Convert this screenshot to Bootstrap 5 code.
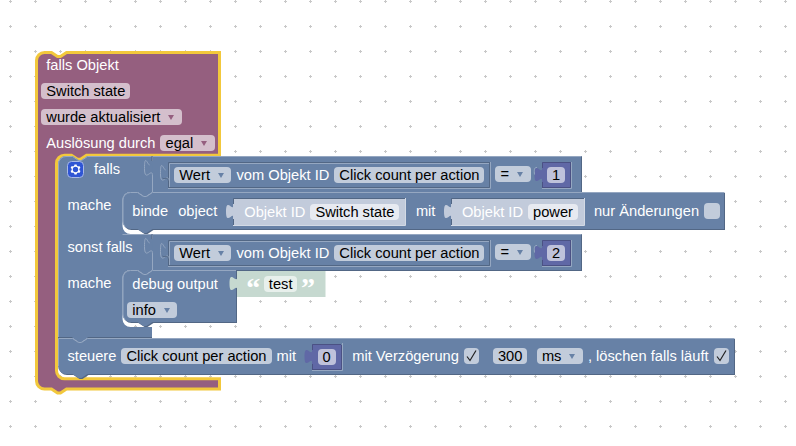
<!DOCTYPE html>
<html lang="de">
<head>
  <meta charset="UTF-8">
  <meta name="viewport" content="width=device-width, initial-scale=1">
  <title>Blockly - Switch state</title>
  <link href="https://cdn.jsdelivr.net/npm/bootstrap@5.3.3/dist/css/bootstrap.min.css" rel="stylesheet">
  <style>
    :root {
      --logic: #6781a6;
      --logic-dark: #526785;
      --logic-light: #95a7c1;
      --event: #955f7f;
      --math: #6068a6;
      --math-dark: #4b5184;
      --select: #f2c83c;
    }

    body {
      font: 14.667px/16px "Liberation Sans", Arial, sans-serif;
      color: #fff;
    }

    .workspace {
      width: 796px;
      height: 446px;
      background: #fff;
    }

    .shapes {
      top: 0;
      left: 0;
    }

    .shapes .main { fill: var(--logic); }
    .shapes .shade { fill: var(--logic-dark); }
    .shapes .light { fill: none; stroke: var(--logic-light); }
    .shapes .dark { fill: none; stroke: var(--logic-dark); }
    .shapes .number { fill: var(--math); }
    .shapes .number-dark { fill: none; stroke: var(--math-dark); }
    .shapes .selected { fill: var(--event); stroke: var(--select); stroke-width: 3; }

    .program {
      padding: 57px 0 0 41.3px;
      white-space: nowrap;
    }

    .head-rows { gap: 10px; }

    .txt { margin: 0 5px; }

    .field {
      height: 16px;
      padding: 0 5px;
      border-radius: 4px;
      background: rgba(255, 255, 255, .6);
      color: #000;
      flex: none;
    }

    .pick::after {
      content: "";
      display: inline-block;
      margin: 0 2.5px 2px 8px;
      border: 3px solid transparent;
      border-top: 5px solid var(--logic);
      border-bottom: 0;
    }

    .head-rows .pick::after { border-top-color: var(--event); }

    .tick {
      width: 15.5px;
      padding: 0;
    }

    .tick svg { display: block; }

    .body-rows { margin: 10px 0 0 21.2px; }

    .cond-row { height: 22px; }
    .cond-row > .side { width: 111.8px; }
    .cond-row > .cond { margin-top: 6px; }

    .do-row { margin-top: 14px; }
    .do-row > .side { width: 64.8px; }
    .do-row.first { height: 23px; margin-bottom: 19px; }
    .do-row.first > .inner { margin-top: 6px; }
    .do-row.second > .inner { margin-top: 1px; gap: 10px; }

    .op { margin: -1px 16.5px 0 11px; }
    .low { margin-top: 1px; }
    .gear { margin: 0 5px 0 4.5px; }
    .shadow-one { margin-left: 17px; }
    .shadow-two { margin-left: 16.5px; }
    .after-one { margin-left: 16.5px; }
    .after-two { margin-left: 16px; }
    .quote {
      width: 12px;
      height: 16px;
      font: bold 28px/16px "Liberation Serif", serif;
      text-indent: -1px;
      padding-top: 4px;
    }
    .string { margin-left: 24.5px; }
    .string .field { margin: 0 4.5px; }

    .control-row { margin-top: 30px; }
    .control-row .num { margin: 1px 11.5px 0 16.5px; }
    .control-row .delay { margin: 0 9.5px 0 13.5px; }
  </style>
</head>
<body>

<main class="workspace position-relative overflow-hidden">

  <!-- Grid and block bodies -->
  <svg class="shapes position-absolute" width="796" height="446" aria-hidden="true">
    <defs>
      <pattern id="grid" width="25" height="25" patternUnits="userSpaceOnUse">
        <path d="M9,1.5h3M10.5,0v3" stroke="#c8c8c8" fill="none"/>
      </pattern>
      <path id="ifBlock" d="M58,164 a8,8 0 0,1 8,-8 h6.500 l6,4 3,0 6,-4 H152.500 V192 l-6,4 -3,0 -6,-4 h-7 a8,8 0 0,0 -8,8 V226 a8,8 0 0,0 8,8 H152.500 V270 l-6,4 -3,0 -6,-4 h-7 a8,8 0 0,0 -8,8 V319 a8,8 0 0,0 8,8 H152 V338 H87.500 l-6,4 -3,0 -6,-4 H58 z"/>
      <path id="bindBlock" d="M122.500,200 a8,8 0 0,1 8,-8 h7 l6,4 3,0 6,-4 H724 V229 H152.500 l-6,4 -3,0 -6,-4 h-7 a8,8 0 0,1 -8,-8 z"/>
      <path id="debugBlock" d="M122.500,278 a8,8 0 0,1 8,-8 h7 l6,4 3,0 6,-4 H236 V322 H152.500 l-6,4 -3,0 -6,-4 h-7 a8,8 0 0,1 -8,-8 z"/>
      <path id="controlBlock" d="M58,338 H72.500 l6,4 3,0 6,-4 H734 V374 H87.500 l-6,4 -3,0 -6,-4 h-6.500 a8,8 0 0,1 -8,-8 z"/>
      <path id="plug" d="M0,20 c0,-10 -8,8 -8,-7.500 s8,2.500 8,-7.500"/>
      <g id="condBlock">
        <path class="shade" d="M152,156H582V193H152z"/>
        <path class="main" d="M152,156H581V192H152z"/>
        <use href="#plug" x="152.500" y="156" class="main"/>
        <path class="light" d="M152,156.500H581.500"/>
        <path class="light" d="M152.500,156V161 M152.500,176c0,-10 -8,8 -8,-7.500 s3,-4 5,-3.500 M152.500,176V192"/>
        <path class="dark" d="M152,156v5"/>
        <!-- value block -->
        <path class="dark" d="M168.500,188V162.500H490"/>
        <path class="light" d="M169.500,187V163.500H489"/>
        <path class="dark" d="M169,187.500H489.500V163"/>
        <path class="light" d="M168,188.500H490.500V162"/>
        <path class="light" d="M168.500,181c0,-10 -8,8 -8,-7.500 s3,-4 5,-3.500"/>
        <path class="dark" d="M168.500,181c-1,-5 -4,-1 -6,-3"/>
        <!-- number block -->
        <path class="number" d="M542,162H571V187H542z"/>
        <use href="#plug" x="542.500" y="162" class="number"/>
        <path class="number-dark" d="M542.500,168V162.500H571 M542.500,182V187.500 M542,187.500H570.500V163"/>
        <path class="light" d="M542,188.500H571.500V162"/>
        <path class="light" d="M537,167.500c-3,-.5 -3,3 -2.500,7"/>
      </g>
    </defs>
    <rect width="796" height="446" fill="url(#grid)"/>

    <!-- selected event block -->
    <path class="selected" d="M36.500,60.500 a8,8 0 0,1 8,-8 h7 l6,4 3,0 6,-4 H219.500 V155.300 H86.500 l-6,4 -3,0 -6,-4 h-7 a8,8 0 0,0 -8,8 V370.700 a8,8 0 0,0 8,8 H219.500 V389 H66.500 l-6,4 -3,0 -6,-4 h-7 a8,8 0 0,1 -8,-8 z"/>

    <use href="#ifBlock" class="main"/>
    <path class="light" d="M58.500,338V164 a7.500,7.500 0 0,1 7.500,-7.500 h6.500 l6,4 3,0 6,-4 H152"/>
    <path class="light" d="M122.500,234.500H152"/>

    <use href="#condBlock"/>
    <use href="#condBlock" y="78"/>

    <use href="#bindBlock" class="shade" x="1" y="1"/>
    <use href="#bindBlock" class="main"/>
    <path class="light" d="M125,226.500 a7.500,7.500 0 0,1 -2,-5.500 V200 a7.500,7.500 0 0,1 7.500,-7.500 h7 l6,4 3,0 6,-4 H724.500"/>
    <g fill="#c2cbdb">
      <path d="M233,199H405V225H233z"/>
      <use href="#plug" x="234" y="199"/>
      <path d="M451,199H584V225H451z"/>
      <use href="#plug" x="452" y="199"/>
    </g>
    <path class="dark" d="M233.500,204V198.500H405 M233.500,219v6 M451.500,204V198.500H584 M451.500,219v6"/>
    <path d="M233,225.500H405.500V198 M451,225.500H584.500V198" fill="none" stroke="#d3dae5"/>

    <use href="#debugBlock" class="shade" x="1" y="1"/>
    <use href="#debugBlock" class="main"/>
    <path class="light" d="M125,319.500 a7.500,7.500 0 0,1 -2,-5.500 V278 a7.500,7.500 0 0,1 7.500,-7.500 h7 l6,4 3,0 6,-4 H236"/>
    <path d="M237,271H325.500V297H237z" fill="#c6d9d0"/>
    <use href="#plug" x="237.500" y="271" fill="#c6d9d0"/>

    <use href="#controlBlock" class="shade" x="1" y="1"/>
    <use href="#controlBlock" class="main"/>
    <path class="light" d="M58.500,366V338.500 H72.500 l6,4 3,0 6,-4 H734.500"/>
    <path class="dark" d="M58,337.500H72.500 M87.500,337.500H152"/>
    <path class="number" d="M312,344H341V369H312z"/>
    <use href="#plug" x="312.500" y="344" class="number"/>
    <path class="number-dark" d="M312.500,350V344.500H341 M312.500,364V369.500 M312,369.500H341.500V345"/>
    <path class="light" d="M312,370.500H342.500V343"/>
  </svg>

  <!-- Labels and fields -->
  <div class="program position-relative">
    <div class="head-rows d-flex flex-column align-items-start">
      <div class="txt">falls Objekt</div>
      <div class="field">Switch state</div>
      <div class="field pick">wurde aktualisiert</div>
      <div class="d-flex">
        <span class="txt">Auslösung durch</span>
        <span class="field pick">egal</span>
      </div>
    </div>

    <div class="body-rows d-flex flex-column">
      <div class="cond-row d-flex align-items-start">
        <div class="side d-flex flex-shrink-0">
          <svg class="gear" width="17" height="17" viewBox="-.5 -.5 17 17" role="img" aria-label="Einstellungen">
            <rect width="16" height="16" rx="4" fill="#2f55d4" stroke="#a9b9e6"/>
            <path fill="#fff" d="m4.203,7.296 0,1.368 -0.920,0.677 -0.110,0.410 0.900,1.559 0.410,0.110 1.043,-0.457 1.187,0.683 0.127,1.134 0.300,0.300 1.800,0 0.300,-0.299 0.127,-1.138 1.185,-0.682 1.046,0.458 0.409,-0.110 0.900,-1.559 -0.110,-0.410 -0.920,-0.677 0,-1.366 0.920,-0.677 0.110,-0.410 -0.900,-1.559 -0.409,-0.109 -1.046,0.458 -1.185,-0.682 -0.127,-1.138 -0.300,-0.299 -1.800,0 -0.300,0.300 -0.126,1.135 -1.187,0.682 -1.043,-0.457 -0.410,0.110 -0.899,1.559 0.108,0.409z"/>
            <circle cx="8" cy="8" r="2.700" fill="#2f55d4"/>
          </svg>
          <span class="txt">falls</span>
        </div>
        <div class="cond d-flex">
          <span class="field pick">Wert</span>
          <span class="txt">vom Objekt ID</span>
          <span class="field">Click count per action</span>
          <span class="field pick op">=</span>
          <span class="field">1</span>
        </div>
      </div>

      <div class="do-row first d-flex align-items-start">
        <div class="side flex-shrink-0"><span class="txt">mache</span></div>
        <div class="inner d-flex">
          <span class="txt">binde</span>
          <span class="txt">object</span>
          <div class="shadow-one low d-flex">
            <span class="txt">Objekt ID</span>
            <span class="field">Switch state</span>
          </div>
          <span class="txt after-one">mit</span>
          <div class="shadow-two low d-flex">
            <span class="txt">Objekt ID</span>
            <span class="field">power</span>
          </div>
          <span class="txt after-two">nur Änderungen</span>
          <span class="field tick"></span>
        </div>
      </div>

      <div class="cond-row d-flex align-items-start">
        <div class="side flex-shrink-0"><span class="txt">sonst falls</span></div>
        <div class="cond d-flex">
          <span class="field pick">Wert</span>
          <span class="txt">vom Objekt ID</span>
          <span class="field">Click count per action</span>
          <span class="field pick op">=</span>
          <span class="field">2</span>
        </div>
      </div>

      <div class="do-row second d-flex align-items-start">
        <div class="side flex-shrink-0"><span class="txt">mache</span></div>
        <div class="inner d-flex flex-column align-items-start">
          <div class="d-flex">
            <span class="txt">debug output</span>
            <div class="string d-flex">
              <span class="quote">“</span>
              <span class="field">test</span>
              <span class="quote">”</span>
            </div>
          </div>
          <span class="field pick">info</span>
        </div>
      </div>

      <div class="control-row d-flex align-items-start">
        <span class="txt">steuere</span>
        <span class="field">Click count per action</span>
        <span class="txt">mit</span>
        <span class="field num">0</span>
        <span class="txt">mit Verzögerung</span>
        <span class="field tick">
          <svg width="15" height="16"><path d="M3,8.500L6,12.500L12,2.500" fill="none" stroke="#222" stroke-width="1.200"/></svg>
        </span>
        <span class="field delay">300</span>
        <span class="field pick">ms</span>
        <span class="txt">, löschen falls läuft</span>
        <span class="field tick">
          <svg width="15" height="16"><path d="M3,8.500L6,12.500L12,2.500" fill="none" stroke="#222" stroke-width="1.200"/></svg>
        </span>
      </div>
    </div>
  </div>
</main>

<script src="https://cdn.jsdelivr.net/npm/bootstrap@5.3.3/dist/js/bootstrap.bundle.min.js"></script>
</body>
</html>
